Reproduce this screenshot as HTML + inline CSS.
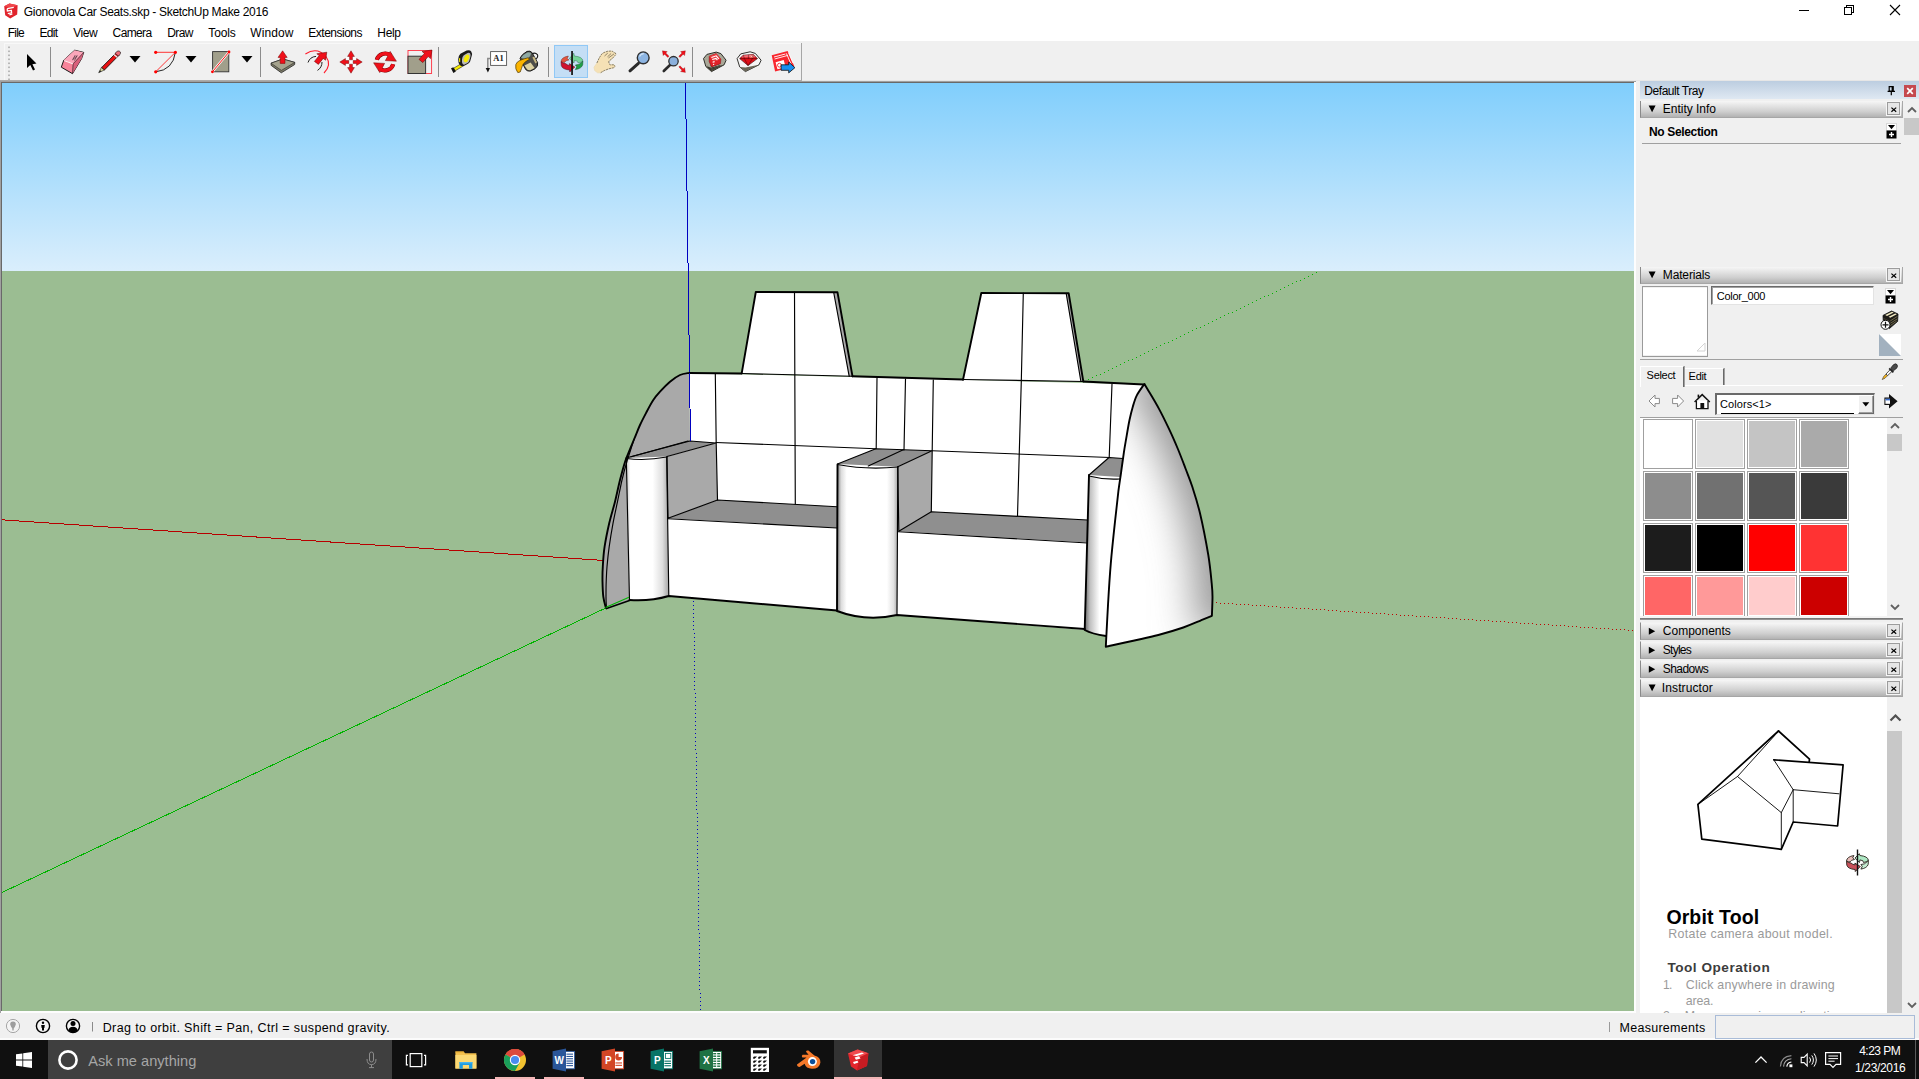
<!DOCTYPE html>
<html lang="en"><head><meta charset="utf-8"><title>Gionovola Car Seats.skp - SketchUp Make 2016</title>
<style>
html,body{margin:0;padding:0}
body{width:1919px;height:1079px;overflow:hidden;position:relative;background:#f0f0f0;font-family:"Liberation Sans",sans-serif;font-size:12px;color:#000}
.b{position:absolute;box-sizing:border-box;display:block}
.t{position:absolute;white-space:pre;line-height:0;height:0;display:block}
</style></head>
<body>
<div class="b" style="left:0;top:81px;width:1636px;height:932px;border-top:1px solid #a0a0a0;border-left:1px solid #a0a0a0;background:#fdfdfd"></div>
<div class="b" style="left:1px;top:82px;width:1633px;height:929px;background:#696969"></div>
<div class="b" id="sky" style="left:2px;top:83px;width:1632px;height:188px;background:linear-gradient(#80cefc,#daeefc)"></div>
<div class="b" id="ground" style="left:2px;top:271px;width:1632px;height:740px;background:#9bbd92"></div>
<svg class="b" id="scene" style="left:2px;top:83px" width="1632" height="928" viewBox="2 83 1632 928">
<defs>
<linearGradient id="cylL" x1="0" x2="1" y1="0" y2="0"><stop offset="0" stop-color="#c8c8c8"/><stop offset="0.1" stop-color="#fff"/><stop offset="0.62" stop-color="#fff"/><stop offset="0.85" stop-color="#dedede"/><stop offset="1" stop-color="#a4a4a4"/></linearGradient>
<linearGradient id="cylM" x1="0" x2="1" y1="0" y2="0"><stop offset="0" stop-color="#7c7c7c"/><stop offset="0.07" stop-color="#dcdcdc"/><stop offset="0.16" stop-color="#fff"/><stop offset="0.82" stop-color="#fff"/><stop offset="0.93" stop-color="#e2e2e2"/><stop offset="1" stop-color="#a6a6a6"/></linearGradient>
<linearGradient id="cylR" x1="0" x2="1" y1="0" y2="0"><stop offset="0" stop-color="#686868"/><stop offset="0.15" stop-color="#c0c0c0"/><stop offset="0.42" stop-color="#fff"/><stop offset="1" stop-color="#fff"/></linearGradient>
<linearGradient id="dome" gradientUnits="userSpaceOnUse" x1="1125" y1="500" x2="1215" y2="540"><stop offset="0" stop-color="#fff"/><stop offset="0.35" stop-color="#f2f2f2"/><stop offset="0.75" stop-color="#d4d4d4"/><stop offset="1" stop-color="#a8a8a8"/></linearGradient>
<filter id="blur" filterUnits="userSpaceOnUse" x="1080" y="360" width="180" height="310"><feGaussianBlur stdDeviation="20"/></filter>
</defs>
<g fill="none" shape-rendering="crispEdges">
<line x1="0" y1="519.7" x2="603" y2="560.4" stroke="#b80000" stroke-width="1"/>
<line x1="0" y1="893.4" x2="606" y2="607.9" stroke="#00b400" stroke-width="1"/>
<line x1="685.5" y1="83" x2="690.5" y2="441" stroke="#0000c0" stroke-width="1"/>
<path d="M693,601h1v1h-1zM693,605h1v1h-1zM693,609h1v1h-1zM693,613h1v1h-1zM693,617h1v1h-1zM693,621h1v1h-1zM693,625h1v1h-1zM693,629h1v1h-1zM694,633h1v1h-1zM694,637h1v1h-1zM694,641h1v1h-1zM694,645h1v1h-1zM694,649h1v1h-1zM694,653h1v1h-1zM694,657h1v1h-1zM694,661h1v1h-1zM694,665h1v1h-1zM694,669h1v1h-1zM694,673h1v1h-1zM694,677h1v1h-1zM694,681h1v1h-1zM694,685h1v1h-1zM694,689h1v1h-1zM695,693h1v1h-1zM695,697h1v1h-1zM695,701h1v1h-1zM695,705h1v1h-1zM695,709h1v1h-1zM695,713h1v1h-1zM695,717h1v1h-1zM695,721h1v1h-1zM695,725h1v1h-1zM695,729h1v1h-1zM695,733h1v1h-1zM695,737h1v1h-1zM695,741h1v1h-1zM695,745h1v1h-1zM695,749h1v1h-1zM696,753h1v1h-1zM696,757h1v1h-1zM696,761h1v1h-1zM696,765h1v1h-1zM696,769h1v1h-1zM696,773h1v1h-1zM696,777h1v1h-1zM696,781h1v1h-1zM696,785h1v1h-1zM696,789h1v1h-1zM696,793h1v1h-1zM696,797h1v1h-1zM696,801h1v1h-1zM696,805h1v1h-1zM696,809h1v1h-1zM697,813h1v1h-1zM697,817h1v1h-1zM697,821h1v1h-1zM697,825h1v1h-1zM697,829h1v1h-1zM697,833h1v1h-1zM697,837h1v1h-1zM697,841h1v1h-1zM697,845h1v1h-1zM697,849h1v1h-1zM697,853h1v1h-1zM697,857h1v1h-1zM697,861h1v1h-1zM697,865h1v1h-1zM697,869h1v1h-1zM698,873h1v1h-1zM698,877h1v1h-1zM698,881h1v1h-1zM698,885h1v1h-1zM698,889h1v1h-1zM698,893h1v1h-1zM698,897h1v1h-1zM698,901h1v1h-1zM698,905h1v1h-1zM698,909h1v1h-1zM698,913h1v1h-1zM698,917h1v1h-1zM698,921h1v1h-1zM698,925h1v1h-1zM698,929h1v1h-1zM699,933h1v1h-1zM699,937h1v1h-1zM699,941h1v1h-1zM699,945h1v1h-1zM699,949h1v1h-1zM699,953h1v1h-1zM699,957h1v1h-1zM699,961h1v1h-1zM699,965h1v1h-1zM699,969h1v1h-1zM699,973h1v1h-1zM699,977h1v1h-1zM699,981h1v1h-1zM699,985h1v1h-1zM699,989h1v1h-1zM700,993h1v1h-1zM700,997h1v1h-1zM700,1001h1v1h-1zM700,1005h1v1h-1zM700,1009h1v1h-1z" fill="#0000c0" shape-rendering="crispEdges"/>
<path d="M1316,272h1v1h-1zM1312,274h1v1h-1zM1308,276h1v1h-1zM1304,278h1v1h-1zM1300,280h1v1h-1zM1296,281h1v1h-1zM1292,283h1v1h-1zM1288,285h1v1h-1zM1284,287h1v1h-1zM1280,289h1v1h-1zM1276,291h1v1h-1zM1272,293h1v1h-1zM1268,295h1v1h-1zM1264,296h1v1h-1zM1260,298h1v1h-1zM1256,300h1v1h-1zM1252,302h1v1h-1zM1248,304h1v1h-1zM1244,306h1v1h-1zM1240,308h1v1h-1zM1236,310h1v1h-1zM1232,312h1v1h-1zM1228,313h1v1h-1zM1224,315h1v1h-1zM1220,317h1v1h-1zM1216,319h1v1h-1zM1212,321h1v1h-1zM1208,323h1v1h-1zM1204,325h1v1h-1zM1200,327h1v1h-1zM1196,328h1v1h-1zM1192,330h1v1h-1zM1188,332h1v1h-1zM1184,334h1v1h-1zM1180,336h1v1h-1zM1176,338h1v1h-1zM1172,340h1v1h-1zM1168,342h1v1h-1zM1164,343h1v1h-1zM1160,345h1v1h-1zM1156,347h1v1h-1zM1152,349h1v1h-1zM1148,351h1v1h-1zM1144,353h1v1h-1zM1140,355h1v1h-1zM1136,357h1v1h-1zM1132,359h1v1h-1zM1128,360h1v1h-1zM1124,362h1v1h-1zM1120,364h1v1h-1zM1116,366h1v1h-1zM1112,368h1v1h-1zM1108,370h1v1h-1zM1104,372h1v1h-1zM1100,374h1v1h-1zM1096,375h1v1h-1zM1092,377h1v1h-1zM1088,379h1v1h-1z" fill="#00b400" shape-rendering="crispEdges"/>
<path d="M1632,630h1v1h-1zM1628,630h1v1h-1zM1624,629h1v1h-1zM1620,629h1v1h-1zM1616,629h1v1h-1zM1612,629h1v1h-1zM1608,628h1v1h-1zM1604,628h1v1h-1zM1600,628h1v1h-1zM1596,628h1v1h-1zM1592,627h1v1h-1zM1588,627h1v1h-1zM1584,627h1v1h-1zM1580,627h1v1h-1zM1576,626h1v1h-1zM1572,626h1v1h-1zM1568,626h1v1h-1zM1564,625h1v1h-1zM1560,625h1v1h-1zM1556,625h1v1h-1zM1552,625h1v1h-1zM1548,624h1v1h-1zM1544,624h1v1h-1zM1540,624h1v1h-1zM1536,624h1v1h-1zM1532,623h1v1h-1zM1528,623h1v1h-1zM1524,623h1v1h-1zM1520,623h1v1h-1zM1516,622h1v1h-1zM1512,622h1v1h-1zM1508,622h1v1h-1zM1504,621h1v1h-1zM1500,621h1v1h-1zM1496,621h1v1h-1zM1492,621h1v1h-1zM1488,620h1v1h-1zM1484,620h1v1h-1zM1480,620h1v1h-1zM1476,620h1v1h-1zM1472,619h1v1h-1zM1468,619h1v1h-1zM1464,619h1v1h-1zM1460,619h1v1h-1zM1456,618h1v1h-1zM1452,618h1v1h-1zM1448,618h1v1h-1zM1444,617h1v1h-1zM1440,617h1v1h-1zM1436,617h1v1h-1zM1432,617h1v1h-1zM1428,616h1v1h-1zM1424,616h1v1h-1zM1420,616h1v1h-1zM1416,616h1v1h-1zM1412,615h1v1h-1zM1408,615h1v1h-1zM1404,615h1v1h-1zM1400,615h1v1h-1zM1396,614h1v1h-1zM1392,614h1v1h-1zM1388,614h1v1h-1zM1384,613h1v1h-1zM1380,613h1v1h-1zM1376,613h1v1h-1zM1372,613h1v1h-1zM1368,612h1v1h-1zM1364,612h1v1h-1zM1360,612h1v1h-1zM1356,612h1v1h-1zM1352,611h1v1h-1zM1348,611h1v1h-1zM1344,611h1v1h-1zM1340,611h1v1h-1zM1336,610h1v1h-1zM1332,610h1v1h-1zM1328,610h1v1h-1zM1324,609h1v1h-1zM1320,609h1v1h-1zM1316,609h1v1h-1zM1312,609h1v1h-1zM1308,608h1v1h-1zM1304,608h1v1h-1zM1300,608h1v1h-1zM1296,608h1v1h-1zM1292,607h1v1h-1zM1288,607h1v1h-1zM1284,607h1v1h-1zM1280,607h1v1h-1zM1276,606h1v1h-1zM1272,606h1v1h-1zM1268,606h1v1h-1zM1264,605h1v1h-1zM1260,605h1v1h-1zM1256,605h1v1h-1zM1252,605h1v1h-1zM1248,604h1v1h-1zM1244,604h1v1h-1zM1240,604h1v1h-1zM1236,604h1v1h-1zM1232,603h1v1h-1zM1228,603h1v1h-1zM1224,603h1v1h-1zM1220,603h1v1h-1zM1216,602h1v1h-1z" fill="#c00000" shape-rendering="crispEdges"/>
</g>
<path d="M689.5,372.8 C687.9,373.2 683.2,373.5 680.0,375.0 C676.8,376.5 673.3,378.9 670.0,381.7 C666.7,384.5 662.8,388.6 660.0,391.7 C657.2,394.8 655.5,396.7 653.3,400.0 C651.1,403.3 648.9,407.5 646.7,411.7 C644.5,415.9 642.1,420.4 640.0,425.0 C637.9,429.6 636.2,434.3 634.2,439.0 C632.2,443.7 629.8,449.5 628.3,453.3 C626.8,457.1 626.4,457.6 625.0,462.0 C623.6,466.4 621.7,473.4 620.0,480.0 C618.3,486.6 616.8,494.5 615.0,501.7 C613.2,508.9 610.9,515.8 609.2,523.3 C607.5,530.8 605.7,539.5 604.6,546.7 C603.5,553.9 603.1,560.9 602.8,566.7 C602.4,572.5 602.4,576.7 602.5,581.7 C602.6,586.7 602.8,592.4 603.3,596.7 C603.8,601.0 605.4,605.7 605.8,607.5 L629.5,600 L626.3,458 L690,441 Z" fill="#a9a9a9"/>
<path d="M689.5,373 L1144,384.5 L1106,636 L1084.7,630 L897,615 L837,611 L669,596.5 L629.5,600 L626.3,458 L690,441 Z" fill="#fff"/>
<path d="M755.8,292 L837.5,292.3 L852.5,376.3 L741.7,373.3 Z" fill="#fff"/>
<path d="M833.7,292.5 L837.5,292.3 L852.5,376.3 L849.2,376.3 Z" fill="#a9a9a9"/>
<path d="M981.3,293 L1068.7,293.3 L1083.3,381.3 L963,379.7 Z" fill="#fff"/>
<path d="M1066.2,293.5 L1068.7,293.3 L1083.3,381.3 L1080.8,381 Z" fill="#a9a9a9"/>
<path d="M626,458 L690,441 L716,443 L667,456.5 Z" fill="#8f8f8f"/>
<path d="M667,456.7 L716,443 L717.5,500 L668,518.3 Z" fill="#a9a9a9"/>
<path d="M668,518.3 L717.5,500 L837,506.7 L837,528 Z" fill="#8f8f8f"/>
<path d="M837.5,464 L875.8,448.7 L932,450.8 L897.8,466.7 Z" fill="#8f8f8f"/>
<path d="M897.8,466.7 L932,450.8 L931.3,511.7 L898.8,531.3 Z" fill="#a9a9a9"/>
<path d="M898.8,531.3 L931.3,511.7 L1087.5,520 L1087.5,542.5 Z" fill="#8f8f8f"/>
<path d="M1089,475 L1109,457.5 L1123,458.5 L1120,477 Z" fill="#8f8f8f"/>
<path d="M626.3,458.5 Q646,461 666.7,457 L668.8,596 Q650,601.5 629.5,600 Z" fill="url(#cylL)"/>
<path d="M837.5,464.5 Q866,470 897.8,467 L897,615 Q866,622 837,611 Z" fill="url(#cylM)"/>
<path d="M1089,476 Q1104,480 1120,479 L1106,636 Q1092,634 1084.7,630 Z" fill="url(#cylR)"/>
<clipPath id="domeclip"><path d="M1144.5,384.0 C1144.2,384.4 1144.1,384.2 1142.8,386.1 C1141.5,388.0 1138.4,392.2 1136.7,395.6 C1135.0,399.0 1134.0,402.6 1132.8,406.7 C1131.6,410.8 1130.5,415.2 1129.5,420.0 C1128.5,424.8 1127.6,430.2 1126.7,435.6 C1125.8,441.0 1124.8,446.2 1123.9,452.3 C1123.0,458.4 1122.0,465.8 1121.1,472.3 C1120.2,478.8 1119.4,483.0 1118.4,491.2 C1117.4,499.4 1116.3,509.7 1115.0,521.7 C1113.7,533.7 1112.0,549.4 1110.8,563.3 C1109.6,577.2 1108.8,591.1 1108.0,605.0 C1107.2,618.9 1106.2,639.8 1105.8,646.7 C1110.4,645.7 1124.5,642.8 1133.3,640.8 C1142.0,638.8 1150.0,637.2 1158.3,635.0 C1166.6,632.8 1176.3,629.9 1183.3,627.5 C1190.2,625.1 1195.2,622.8 1200.0,620.8 C1204.8,618.8 1209.9,616.6 1211.9,615.8 C1212.0,612.6 1212.5,602.1 1212.5,596.7 C1212.5,591.3 1212.4,590.2 1211.7,583.3 C1211.0,576.3 1210.2,566.7 1208.3,555.0 C1206.3,543.3 1202.7,524.7 1200.0,513.3 C1197.3,501.9 1194.7,494.2 1192.3,486.8 C1189.9,479.4 1188.1,475.3 1185.7,469.0 C1183.3,462.7 1180.7,455.7 1177.9,449.0 C1175.1,442.3 1172.2,435.6 1169.0,428.9 C1165.8,422.2 1162.2,414.8 1159.0,408.9 C1155.8,403.0 1152.4,397.4 1150.0,393.3 C1147.6,389.2 1145.4,385.6 1144.5,384.0 Z"/></clipPath>
<path d="M1144.5,384.0 C1144.2,384.4 1144.1,384.2 1142.8,386.1 C1141.5,388.0 1138.4,392.2 1136.7,395.6 C1135.0,399.0 1134.0,402.6 1132.8,406.7 C1131.6,410.8 1130.5,415.2 1129.5,420.0 C1128.5,424.8 1127.6,430.2 1126.7,435.6 C1125.8,441.0 1124.8,446.2 1123.9,452.3 C1123.0,458.4 1122.0,465.8 1121.1,472.3 C1120.2,478.8 1119.4,483.0 1118.4,491.2 C1117.4,499.4 1116.3,509.7 1115.0,521.7 C1113.7,533.7 1112.0,549.4 1110.8,563.3 C1109.6,577.2 1108.8,591.1 1108.0,605.0 C1107.2,618.9 1106.2,639.8 1105.8,646.7 C1110.4,645.7 1124.5,642.8 1133.3,640.8 C1142.0,638.8 1150.0,637.2 1158.3,635.0 C1166.6,632.8 1176.3,629.9 1183.3,627.5 C1190.2,625.1 1195.2,622.8 1200.0,620.8 C1204.8,618.8 1209.9,616.6 1211.9,615.8 C1212.0,612.6 1212.5,602.1 1212.5,596.7 C1212.5,591.3 1212.4,590.2 1211.7,583.3 C1211.0,576.3 1210.2,566.7 1208.3,555.0 C1206.3,543.3 1202.7,524.7 1200.0,513.3 C1197.3,501.9 1194.7,494.2 1192.3,486.8 C1189.9,479.4 1188.1,475.3 1185.7,469.0 C1183.3,462.7 1180.7,455.7 1177.9,449.0 C1175.1,442.3 1172.2,435.6 1169.0,428.9 C1165.8,422.2 1162.2,414.8 1159.0,408.9 C1155.8,403.0 1152.4,397.4 1150.0,393.3 C1147.6,389.2 1145.4,385.6 1144.5,384.0 Z" fill="#fff"/>
<g clip-path="url(#domeclip)"><path d="M1144.5,384.0 C1145.4,385.6 1147.6,389.2 1150.0,393.3 C1152.4,397.4 1155.8,403.0 1159.0,408.9 C1162.2,414.8 1165.8,422.2 1169.0,428.9 C1172.2,435.6 1175.1,442.3 1177.9,449.0 C1180.7,455.7 1183.3,462.7 1185.7,469.0 C1188.1,475.3 1189.9,479.4 1192.3,486.8 C1194.7,494.2 1197.3,501.9 1200.0,513.3 C1202.7,524.7 1206.3,543.3 1208.3,555.0 C1210.2,566.7 1211.0,576.3 1211.7,583.3 C1212.4,590.2 1212.5,591.3 1212.5,596.7 C1212.5,602.1 1212.0,612.6 1211.9,615.8 L1240,616 L1240,384 Z" fill="#969696" stroke="#969696" stroke-width="34" filter="url(#blur)"/></g>
<g fill="none" stroke="#000" stroke-linejoin="round" stroke-linecap="round" stroke-width="1.15">
<path d="M716,442.5 L875.8,448.7"/>
<path d="M932,450.8 L1110,457.5"/>
<path d="M715.3,373.5 L716.2,443 L717.5,500"/>
<path d="M794.5,292 L795.3,504"/>
<path d="M877,378 L876.2,448.5"/>
<path d="M905.5,379 L904,450"/>
<path d="M933.3,380 L932.2,450.8 L931.3,511.7"/>
<path d="M1023.3,293 L1021.3,381 L1017.5,516"/>
<path d="M1112,384 L1109.2,457.5"/>
<path d="M741.7,373.5 L852.5,376.3"/>
<path d="M963,379.5 L1083.3,381.5"/>
<path d="M833.7,292.5 L849.2,376.3"/>
<path d="M1066.2,293.5 L1080.8,381"/>
<path d="M626,458 L690,441 L716,443 L667,456.5"/>
<path d="M631,456.7 L688,441"/>
<path d="M667,456.7 L668,518.3 L717.5,500 L837,506.7"/>
<path d="M668,518.8 L837,528"/>
<path d="M666.7,457 L668.8,596"/>
<path d="M626.3,458.5 Q646,461 666.7,457"/>
<path d="M837.5,464 L875.8,448.7 L932,450.8 L897.8,466.7"/>
<path d="M868.3,466 L903.3,449.7"/>
<path d="M837.5,464.5 Q866,470 897.8,467"/>
<path d="M897.8,466.7 L898.8,531.3 L931.3,511.7 L1087.5,520"/>
<path d="M898.5,531.8 L1087.5,543"/>
<path d="M897.8,467 L897,615"/>
<path d="M1089,475 L1109,457.5 L1123,458.5"/>
<path d="M1089,476 Q1104,480 1120,479"/>
<path d="M626.3,458 L629.5,600"/>
<path d="M634.2,439.0 C633.4,441.4 630.7,449.7 629.5,453.5 C628.3,457.3 628.0,457.6 626.8,462.0 C625.5,466.4 623.5,473.4 622.0,480.0 C620.5,486.6 619.0,494.5 617.5,501.7 C616.0,508.9 614.4,515.8 613.0,523.3 C611.6,530.8 610.2,539.5 609.2,546.7 C608.2,553.9 607.5,560.9 607.0,566.7 C606.5,572.5 606.4,576.7 606.2,581.7 C606.0,586.7 606.0,592.5 606.0,596.7 C606.0,600.9 606.3,605.3 606.4,607.0"/>
</g>
<g fill="none" stroke="#000" stroke-linejoin="round" stroke-linecap="round" stroke-width="1.9">
<path d="M689.5,372.8 C687.9,373.2 683.2,373.5 680.0,375.0 C676.8,376.5 673.3,378.9 670.0,381.7 C666.7,384.5 662.8,388.6 660.0,391.7 C657.2,394.8 655.5,396.7 653.3,400.0 C651.1,403.3 648.9,407.5 646.7,411.7 C644.5,415.9 642.1,420.4 640.0,425.0 C637.9,429.6 636.2,434.3 634.2,439.0 C632.2,443.7 629.8,449.5 628.3,453.3 C626.8,457.1 626.4,457.6 625.0,462.0 C623.6,466.4 621.7,473.4 620.0,480.0 C618.3,486.6 616.8,494.5 615.0,501.7 C613.2,508.9 610.9,515.8 609.2,523.3 C607.5,530.8 605.7,539.5 604.6,546.7 C603.5,553.9 603.1,560.9 602.8,566.7 C602.4,572.5 602.4,576.7 602.5,581.7 C602.6,586.7 602.8,592.4 603.3,596.7 C603.8,601.0 605.4,605.7 605.8,607.5"/>
<path d="M689.5,373 L741.7,373.5"/>
<path d="M852.5,376.3 L963,379.5"/>
<path d="M1083.3,381.5 L1144,384.5"/>
<path d="M741.7,373.3 L755.8,292 L837.5,292.3 L852.5,376.3"/>
<path d="M963,379.7 L981.3,293 L1068.7,293.3 L1083.3,381.3"/>
<path d="M629.5,600 Q650,601.5 668.8,596 L837,610.5"/>
<path d="M837.5,464.5 L837,611 Q866,622 897,615 L1084.7,629"/>
<path d="M1089,475 L1084.7,630 Q1092,634 1106,636"/>
<path d="M1144.5,384.0 C1144.2,384.4 1144.1,384.2 1142.8,386.1 C1141.5,388.0 1138.4,392.2 1136.7,395.6 C1135.0,399.0 1134.0,402.6 1132.8,406.7 C1131.6,410.8 1130.5,415.2 1129.5,420.0 C1128.5,424.8 1127.6,430.2 1126.7,435.6 C1125.8,441.0 1124.8,446.2 1123.9,452.3 C1123.0,458.4 1122.0,465.8 1121.1,472.3 C1120.2,478.8 1119.4,483.0 1118.4,491.2 C1117.4,499.4 1116.3,509.7 1115.0,521.7 C1113.7,533.7 1112.0,549.4 1110.8,563.3 C1109.6,577.2 1108.8,591.1 1108.0,605.0 C1107.2,618.9 1106.2,639.8 1105.8,646.7 C1110.4,645.7 1124.5,642.8 1133.3,640.8 C1142.0,638.8 1150.0,637.2 1158.3,635.0 C1166.6,632.8 1176.3,629.9 1183.3,627.5 C1190.2,625.1 1195.2,622.8 1200.0,620.8 C1204.8,618.8 1209.9,616.6 1211.9,615.8 C1212.0,612.6 1212.5,602.1 1212.5,596.7 C1212.5,591.3 1212.4,590.2 1211.7,583.3 C1211.0,576.3 1210.2,566.7 1208.3,555.0 C1206.3,543.3 1202.7,524.7 1200.0,513.3 C1197.3,501.9 1194.7,494.2 1192.3,486.8 C1189.9,479.4 1188.1,475.3 1185.7,469.0 C1183.3,462.7 1180.7,455.7 1177.9,449.0 C1175.1,442.3 1172.2,435.6 1169.0,428.9 C1165.8,422.2 1162.2,414.8 1159.0,408.9 C1155.8,403.0 1152.4,397.4 1150.0,393.3 C1147.6,389.2 1145.4,385.6 1144.5,384.0 Z"/>
</g>
<g fill="none" shape-rendering="crispEdges"><line x1="689.5" y1="373" x2="690.5" y2="441" stroke="#0000c0" stroke-width="1"/></g>
<line x1="606.5" y1="608.6" x2="629.5" y2="600.4" stroke="#000" stroke-width="1.6" stroke-linecap="round"/>
<line x1="605.5" y1="607.4" x2="629" y2="597.2" stroke="#00b400" stroke-width="1.1"/>
</svg>
<div class="b" style="left:0px;top:0px;width:1919px;height:41px;background:#fff;"></div>
<svg class="b" style="left:3px;top:3px" width="16" height="17" viewBox="3 3 16 17">
<path d="M4.2,6.2 L9.5,3.6 L17.6,5.2 L17.2,14.6 L10.2,18.6 L5.2,15.2 Z" fill="#e0232b"/>
<path d="M4.2,6.2 L9.5,3.6 L17.6,5.2 L11.6,8 Z" fill="#f0464b"/>
<path d="M7.2,8.6 L13.8,7.4 M7.2,8.6 L7.4,11 L11.4,10.4 L11.6,12.8 L7.8,13.6 M9.4,14.9 L12.4,14" fill="none" stroke="#fff" stroke-width="1.3"/>
</svg>
<span class="t" style="left:23.80px;top:11.60px;font-size:12px;color:#000;letter-spacing:-0.313px;">Gionovola Car Seats.skp - SketchUp Make 2016</span>
<svg class="b" style="left:1790px;top:0" width="129" height="22" viewBox="1790 0 129 22" shape-rendering="crispEdges">
<rect x="1799" y="10" width="10" height="1" fill="#000"/>
<rect x="1846.5" y="5.5" width="7" height="7" fill="none" stroke="#000"/>
<rect x="1844.5" y="7.5" width="7" height="7" fill="#fff" stroke="#000"/>
<path d="M1890,5 L1900,15 M1900,5 L1890,15" stroke="#000" stroke-width="1.1" fill="none" shape-rendering="auto"/>
</svg>
<span class="t" style="left:7.80px;top:32.70px;font-size:12px;color:#000;letter-spacing:-0.821px;">File</span>
<span class="t" style="left:39.50px;top:32.70px;font-size:12px;color:#000;letter-spacing:-0.681px;">Edit</span>
<span class="t" style="left:73.30px;top:32.70px;font-size:12px;color:#000;letter-spacing:-0.476px;">View</span>
<span class="t" style="left:112.60px;top:32.70px;font-size:12px;color:#000;letter-spacing:-0.621px;">Camera</span>
<span class="t" style="left:167.30px;top:32.70px;font-size:12px;color:#000;letter-spacing:-0.612px;">Draw</span>
<span class="t" style="left:208.30px;top:32.70px;font-size:12px;color:#000;letter-spacing:-0.128px;">Tools</span>
<span class="t" style="left:250.20px;top:32.70px;font-size:12px;color:#000;letter-spacing:0.117px;">Window</span>
<span class="t" style="left:308.30px;top:32.70px;font-size:12px;color:#000;letter-spacing:-0.500px;">Extensions</span>
<span class="t" style="left:377.30px;top:32.70px;font-size:12px;color:#000;letter-spacing:-0.335px;">Help</span>
<div class="b" style="left:0px;top:41px;width:1919px;height:40px;background:#f0f0f0;"></div>
<div class="b" style="left:4px;top:43px;width:798px;height:1px;background:#f8f8f8;"></div>
<div class="b" style="left:801px;top:43px;width:1px;height:38px;background:#a6a6a6;"></div>
<div class="b" style="left:4px;top:43px;width:1px;height:37px;background:#f8f8f8;"></div>
<div class="b" style="left:0px;top:80px;width:802px;height:1px;background:#ababab;"></div>
<div class="b" style="left:802px;top:80px;width:1117px;height:1px;background:#e6e6e6;"></div>
<div class="b" style="left:554px;top:45px;width:34px;height:33px;background:#c4def5;border:1px solid #90c8f6"></div>
<svg class="b" style="left:0;top:41px" width="810" height="40" viewBox="0 41 810 40">
<rect x="8" y="46.5" width="2" height="1.6" fill="#b8b8b8"/>
<rect x="8" y="50.5" width="2" height="1.6" fill="#b8b8b8"/>
<rect x="8" y="54.5" width="2" height="1.6" fill="#b8b8b8"/>
<rect x="8" y="58.5" width="2" height="1.6" fill="#b8b8b8"/>
<rect x="8" y="62.5" width="2" height="1.6" fill="#b8b8b8"/>
<rect x="8" y="66.5" width="2" height="1.6" fill="#b8b8b8"/>
<rect x="8" y="70.5" width="2" height="1.6" fill="#b8b8b8"/>
<rect x="8" y="74.5" width="2" height="1.6" fill="#b8b8b8"/>
<rect x="8" y="78.5" width="2" height="1.6" fill="#b8b8b8"/>
<rect x="50.0" y="47" width="1" height="30" fill="#8c8c8c"/>
<rect x="260.0" y="47" width="1" height="30" fill="#8c8c8c"/>
<rect x="438.0" y="47" width="1" height="30" fill="#8c8c8c"/>
<rect x="548.0" y="47" width="1" height="30" fill="#8c8c8c"/>
<rect x="692.0" y="47" width="1" height="30" fill="#8c8c8c"/>
<path d="M27,54 L27,68 L30.3,65 L33,70.5 L35,69.5 L32.4,64.2 L36.5,63.5 Z" fill="#000"/>
<path d="M61.3,67.2 L63.8,60.1 L74.7,50.2 L83.7,52.4 L81.6,58.6 L72.5,73.7 Z" fill="#f7849a" stroke="#1a1a1a" stroke-width="1" stroke-linejoin="round"/>
<path d="M63.8,60.1 L74.7,50.2 L83.7,52.4 L73.1,63.6 Z" fill="#fba6ba"/>
<path d="M73.1,63.8 L83.7,52.4 L81.6,58.6 L72.5,73.7 Z" fill="#d9607c"/>
<path d="M73.1,63.8 L72.5,73.7 M73.1,63.8 L83.7,52.4" stroke="#1a1a1a" stroke-width="0.6" fill="none"/>
<path d="M64.2,60.6 L73,63.9" stroke="#fff" stroke-width="0.9"/>
<path d="M72.6,59.8 L75.2,55.2 M74.4,60.6 L77.2,55.6 M72.6,59.8 L77.2,55.6" stroke="#3a2a30" stroke-width="0.7" fill="none"/>
<path d="M98.7,72.7 L101.5,67.3 L104.8,69.8 Z" fill="#d8d49a" stroke="#222" stroke-width="0.6"/>
<path d="M98.7,72.7 L100,70.2 L101.4,71.3 Z" fill="#111"/>
<path d="M101.7,67.5 L116.4,52.6 L119.2,55 L104.5,69.9 Z" fill="#e81111" stroke="#1a1a1a" stroke-width="0.9"/>
<path d="M115,53.4 L117.2,51.2 Q119.4,50.3 120.4,52 Q120.9,53.5 119.6,54.8 L118.4,56 Z" fill="#f06a78" stroke="#222" stroke-width="0.7"/>
<path d="M113.8,54.6 L117.2,57.2" stroke="#eee" stroke-width="1.2"/>
<path d="M129.5,56 L140.5,56 L135,62.5 Z" fill="#000"/>
<path d="M155.7,71.8 Q173,70 175.4,52.3" fill="none" stroke="#111" stroke-width="0.9"/>
<path d="M155.7,52.3 L175.4,52.3 L155.7,71.8" fill="none" stroke="#ff2020" stroke-width="0.9"/>
<circle cx="155.7" cy="52.3" r="1.6" fill="#ff0000"/>
<circle cx="175.4" cy="52.3" r="1.6" fill="#ff0000"/>
<circle cx="155.7" cy="71.8" r="1.6" fill="#ff0000"/>
<path d="M185.5,56 L196.5,56 L191,62.5 Z" fill="#000"/>
<rect x="212.6" y="51.6" width="16.2" height="20.2" fill="#a19f8b" stroke="#333" stroke-width="0.9"/>
<path d="M212.4,71.8 L229,52" stroke="#fff" stroke-width="2.2"/><path d="M212.4,71.8 L229,52" stroke="#ff1010" stroke-width="1"/>
<circle cx="212.4" cy="71.8" r="1.4" fill="#f00"/><circle cx="229" cy="52" r="1.4" fill="#f00"/>
<path d="M241.5,56 L252.5,56 L247,62.5 Z" fill="#000"/>
<path d="M271,63.2 L282.8,59 L294.8,62.4 L294.6,64.6 L281.3,72.8 L271.2,65.4 Z" fill="#7d7b68" stroke="#222" stroke-width="0.8" stroke-linejoin="round"/>
<path d="M271,63.2 L282.8,59 L294.8,62.4 L281.4,70.4 Z" fill="#a5a38e" stroke="#222" stroke-width="0.6"/>
<path d="M282.6,50.8 L287.2,57.4 L285,57.4 L285,63.4 L280.2,63.4 L280.2,57.4 L278,57.4 Z" fill="#f0101a" stroke="#7a0000" stroke-width="0.5"/>
<path d="M305.4,54 Q317,46.5 326,56.5 Q332,65 324,73" fill="none" stroke="#ff1a2a" stroke-width="1.1"/>
<path d="M308,62.5 Q310,56.8 316,56.4 M317.5,70.4 Q322,67.5 322,62" fill="none" stroke="#222" stroke-width="1"/>
<path d="M326.8,52.2 L325.6,60.2 L323.2,58.4 L318.4,64.4 L314.4,61.4 L319.2,55.6 L316.8,53.8 Z" fill="#f0101a" stroke="#5a0000" stroke-width="0.5"/>
<g fill="#f0101a" stroke="#6a0000" stroke-width="0.45" stroke-linejoin="round"><path d="M351,50.8 L354.4,56.4 L352.4,56.4 L352.4,59.8 L349.6,59.8 L349.6,56.4 L347.6,56.4 Z"/><path d="M351,73.2 L354.4,67.6 L352.4,67.6 L352.4,64.2 L349.6,64.2 L349.6,67.6 L347.6,67.6 Z"/><path d="M339.8,62 L345.4,58.6 L345.4,60.6 L348.8,60.6 L348.8,63.4 L345.4,63.4 L345.4,65.4 Z"/><path d="M362.2,62 L356.6,58.6 L356.6,60.6 L353.2,60.6 L353.2,63.4 L356.6,63.4 L356.6,65.4 Z"/></g>
<g fill="#fff"><rect x="346.2" y="57.2" width="2.6" height="2.6"/><rect x="353.2" y="57.2" width="2.6" height="2.6"/><rect x="346.2" y="64.2" width="2.6" height="2.6"/><rect x="353.2" y="64.2" width="2.6" height="2.6"/><rect x="349.7" y="60.7" width="2.6" height="2.6"/></g>
<g fill="none" stroke="#6a0000" stroke-width="4.2"><path d="M376.8,59.8 A8.6,8.6 0 0 1 390.4,55.4"/><path d="M393.2,64.2 A8.6,8.6 0 0 1 379.6,68.6"/></g>
<g fill="#f0101a" stroke="#6a0000" stroke-width="0.5" stroke-linejoin="round"><path d="M390.2,51.4 L396.4,61.2 L385.4,60.6 Z"/><path d="M379.8,72.6 L373.6,62.8 L384.6,63.4 Z"/></g>
<g fill="none" stroke="#f0101a" stroke-width="3.3"><path d="M376.8,59.8 A8.6,8.6 0 0 1 390.4,55.4"/><path d="M393.2,64.2 A8.6,8.6 0 0 1 379.6,68.6"/></g>
<rect x="408" y="50.5" width="23.6" height="23" fill="none" stroke="#ff3040" stroke-width="0.9"/>
<rect x="408" y="56.2" width="17.6" height="17.3" fill="#a19f8b" stroke="#333" stroke-width="1"/>
<path d="M432,50 L430.6,58.6 L428.2,56.6 L422.8,62.6 L419,59.4 L424.4,53.4 L422,51.4 Z" fill="#f0101a" stroke="#5a0000" stroke-width="0.5"/>
<path d="M453.6,68.2 L461,63.8 L462.6,66.4 L455.2,70.8 Z" fill="#f6ea00" stroke="#222" stroke-width="0.6"/>
<path d="M451,68.2 L453.4,67.2 L455.8,71.4 L453.4,73 Z" fill="#111"/>
<path d="M458.2,59.2 Q458.6,55.4 460.4,53.8 L466.6,50.6 Q470,49.8 471.2,51.6 Q472.4,53.6 471.8,55.6 L470.2,61.2 Q469.4,63 468,63.8 L463.4,66.2 Q461.4,66.6 460,65.2 Q458,63 458.2,59.2 Z" fill="#1a1a1a"/>
<path d="M462,59.6 Q462.2,56.6 463.8,55.2 L467.6,53 Q469.8,52.4 470.4,54 Q470.8,55.4 470.4,56.8 L469.2,61 Q468.6,62.4 467.6,63 L464.6,64.6 Q463,64.8 462.4,63.4 Q461.8,61.8 462,59.6 Z" fill="#b9b9b9"/>
<ellipse cx="466.5" cy="58.4" rx="2.3" ry="4" transform="rotate(26 466.5 58.4)" fill="#f6ea00"/>
<path d="M459,58.4 L460.2,57.8 L460.2,62.2 L459.2,62 Z" fill="#f6ea00"/>
<rect x="490.6" y="51.6" width="16" height="13.8" fill="#fff" stroke="#555" stroke-width="0.9"/>
<text x="493.3" y="60.8" font-family="&quot;Liberation Serif&quot;, serif" font-weight="700" font-size="8.6" fill="#222" textLength="10.4" lengthAdjust="spacingAndGlyphs">A1</text>
<path d="M490.4,58.4 L487.8,58.4 L487.8,68.4" fill="none" stroke="#8a8a8a" stroke-width="1.5"/>
<path d="M485.7,68 L490,68 L487.9,72.6 Z" fill="#111"/>
<path d="M531.6,54.2 Q535,51.8 537.4,54.6 Q538.6,57.2 535.4,59.6" fill="none" stroke="#1a1a1a" stroke-width="1.1"/>
<path d="M520,58.2 Q521.6,54.4 527,51.4 Q530.4,50.4 532,52.6 L537.6,62.6 Q538.6,66 535,68.8 L530.6,71 Q527.4,71.6 525.6,69.4 Z" fill="#4e4e4a" stroke="#1a1a1a" stroke-width="1" stroke-linejoin="round"/>
<path d="M521,57.8 Q522.4,54.8 527.2,52.4 Q529.8,51.8 531,53.2 Q530.8,56.2 528.4,57.8 Q524.6,59.6 521,57.8 Z" fill="#8faaa4"/>
<path d="M524.4,65.6 L530.6,62.6 L534.6,68 L530.2,70.2 Q527.8,70.4 526.8,69 Z" fill="#ddd2a0"/>
<path d="M532.4,57.4 L534.2,56.4 L537,62.2 L535.4,63.4 Z" fill="#c8b882"/>
<path d="M515.8,64.6 Q516.8,61.6 520,60.4 Q524.4,58.6 528,57.8 L529.6,59.2 Q524.4,61.6 522.6,65 Q521.6,68.6 520.2,72 L517.8,72.6 Q515,69 515.8,64.6 Z" fill="#fbb400" stroke="#4a3500" stroke-width="0.7" stroke-linejoin="round"/>
<path d="M561,61.4 Q561.4,57.2 568.4,56 L567.2,58.4 L569,60 Q565.4,60.4 564.6,62.4 Q562.6,62.6 561,61.4 Z" fill="#e2553f" stroke="#5a1a10" stroke-width="0.4"/>
<path d="M573.8,53.2 L574.4,56 Q582.4,56.8 582.9,60.8 Q581,62.6 578,63 Q578.6,60.8 574.4,60.4 L574,63 L569.4,58.6 Z" fill="#76d49a" stroke="#1d5a38" stroke-width="0.4"/>
<path d="M561,61.6 Q563,63.4 565.6,63.6 Q567,65 569.6,65.4 L569.4,63.6 L574.8,67 L569.8,72 L569.6,70 Q562.2,69.4 561.3,65.6 Z" fill="#d0122e" stroke="#4a0010" stroke-width="0.5"/>
<path d="M582.9,61 L582.7,64.8 Q581.6,68.6 575.4,69.6 L576.8,66.8 L575.4,65 Q579.6,64.8 580.6,63 Q582,62.4 582.9,61 Z" fill="#1fa046" stroke="#0d4a22" stroke-width="0.5"/>
<rect x="571.2" y="51" width="1.7" height="24" fill="#111"/>
<path d="M594,67.3 L596.9,63 L599.1,58.2 L601.6,54.2 L603.8,52.6 L607.5,51.3 L610.4,51.1 L612.6,51.3 L613.7,52.4 L615.5,53.1 L615.8,54.6 L612.2,58.6 L608.9,61.1 L608.9,63.7 L610.4,64.8 L614,64.8 L615.1,66.3 L613.7,67.7 L608.9,68.8 L604.2,70.6 L600.5,72.8 L597.6,72.8 L594.7,70.6 Z" fill="#f5e1b5" stroke="#e9d7ab" stroke-width="0.6" stroke-linejoin="round"/>
<path d="M596.9,63 L599.1,58.2 L601.6,54.2 L603.8,52.6 L607.5,51.3 L610.4,51.1 L612.6,51.3 L613.7,52.4 L615.5,53.1 L615.8,54.6 L612.2,58.6 L608.9,61.1 L608.9,63.7 L610.4,64.8 L614,64.8 L615.1,66.3 L613.7,67.7 L608.9,68.8 L604.2,70.6 L600.5,72.8" fill="none" stroke="#3a3426" stroke-width="0.7" stroke-dasharray="2.2 0.8" stroke-linejoin="round" opacity="0.8"/>
<path d="M604.5,56 L607.8,53.1 M607.5,56.8 L611.1,53.5 M608.4,58 L614,53.9" stroke="#3a3426" stroke-width="0.7" fill="none" opacity="0.75"/>
<path d="M638.4,63.4 L630,70.8" stroke="#2a2a2a" stroke-width="3" stroke-linecap="round"/>
<circle cx="643.2" cy="57.8" r="5.9" fill="#8db5e2" stroke="#2f2f2f" stroke-width="1.4"/>
<path d="M639.6,56.6 Q640.6,53.8 643.8,53.6" fill="none" stroke="#cfe3f7" stroke-width="1.2"/>
<path d="M670,65 L663.8,71" stroke="#2a2a2a" stroke-width="2.6" stroke-linecap="round"/>
<circle cx="673.5" cy="61.2" r="4.7" fill="#8bb0dc" stroke="#2f2f2f" stroke-width="1.3"/>
<g fill="#f0101a" stroke="#7a0000" stroke-width="0.3"><path d="M662.4,50.8 L667.2,51.6 L665.8,53 L669,56.2 L667.8,57.4 L664.6,54.2 L663.2,55.6 Z"/><path d="M685.4,50.8 L680.6,51.6 L682,53 L678.8,56.2 L680,57.4 L683.2,54.2 L684.6,55.6 Z"/><path d="M685.4,72.4 L680.6,71.6 L682,70.2 L678.8,67 L680,65.8 L683.2,69 L684.6,67.6 Z"/></g>
<path d="M703.5,58.6 L706.9,54.4 L716.2,52.1 L720.9,53.6 L726.1,60.2 L724.1,64.8 L711.5,71.6 L705.8,66.4 Z" fill="#a9a898" stroke="#1c1c18" stroke-width="0.9" stroke-linejoin="round"/>
<path d="M705.8,66.4 L711.5,67.4 L724.1,64.8 L711.5,71.6 Z" fill="#4a483c"/>
<path d="M707.4,66.2 L711.4,70 M710.4,65.6 L714.4,68.6 M714,65.4 L717.6,67.4 M717.6,64.8 L720.6,66.2" stroke="#1c1c18" stroke-width="0.6" fill="none"/>
<path d="M709.2,56.2 L716.2,53.6 L720.9,59.1 L720.4,63.8 L711.5,66.9 L709.2,61.7 Z" fill="#e02028" stroke="#7c0d13" stroke-width="0.5" stroke-linejoin="round"/>
<path d="M709.2,56.2 L716.2,53.6 L720.9,59.1 L713.4,61.6 Z" fill="#ea3a40"/>
<path d="M711.4,57.4 L716.2,55.8 L718.8,58.8 M712.2,59.6 L716,58.4 L717.4,60.2 M712.6,62.2 L714.6,61.6 M713,64.6 L714.2,64.2" stroke="#fff" stroke-width="1.1" fill="none"/>
<path d="M737.1,58.6 L740.7,53.9 L750.1,51.8 L755.3,53.4 L761.1,60.2 L759,64.8 L745.4,71.6 L739.7,66.9 Z" fill="#f6f6f6" stroke="#1c1c18" stroke-width="0.9" stroke-linejoin="round"/>
<path d="M739.7,66.9 L745.4,67.6 L759,64.8 L745.4,71.6 Z" fill="#6a6656"/>
<path d="M739.7,58.6 L743.3,55.2 L753.2,54.4 L757.4,58.6 L748,65.6 Z" fill="#e01018" stroke="#3a0004" stroke-width="0.6" stroke-linejoin="round"/>
<path d="M743.3,55.4 L753.2,54.6 L755.6,57.2 L741.6,57.6 Z" fill="#f07078"/>
<path d="M739.7,58.6 L757.4,58.6 M744.4,58.6 L748,65.6 L752.4,58.6 M744.4,58.6 L743.3,55.2 M752.4,58.6 L753.2,54.4 M748.4,54.8 L748.4,58.6" stroke="#3a0004" stroke-width="0.45" fill="none"/>
<path d="M750.6,55.6 L752.6,57.8 M752.6,55.6 L750.6,57.8" stroke="#fff2c8" stroke-width="0.6"/>
<path d="M771.7,55.2 L787.6,51 L794.4,66.6 L775.1,71.6 Z" fill="#f8262e"/>
<path d="M774,57 L785.4,54 M774.6,59 L787.8,55.4 M786.4,53.4 L791,64 M788.6,52.8 L793,63" stroke="#fff" stroke-width="0.9" fill="none"/>
<rect x="776.4" y="61" width="8.4" height="7.4" fill="#fff" transform="rotate(-15 780.6 64.7)"/>
<circle cx="779.4" cy="65.2" r="1.9" fill="none" stroke="#f8262e" stroke-width="0.9"/>
<path d="M781.1,64.8 L788.7,64.8 L788.7,62 L794.9,67.7 L788.7,72.9 L788.7,70.3 L781.1,70.3 Z" fill="#1890f0" stroke="#101010" stroke-width="0.8" stroke-linejoin="round"/>
</svg>
<div class="b" style="left:1640px;top:81px;width:279px;height:18px;background:linear-gradient(#bccde0,#dfe8f2);"></div>
<span class="t" style="left:1644.30px;top:90.60px;font-size:12px;color:#000;letter-spacing:-0.446px;">Default Tray</span>
<svg class="b" style="left:1887px;top:86px" width="9" height="10" viewBox="0 0 9 10"><path d="M2.2,0.6 L6.2,0.6 L6.2,5 L2.2,5 Z M0.6,5.4 L8,5.4 M4.3,5.4 L4.3,9.2" fill="none" stroke="#000" stroke-width="1.2"/><rect x="4.6" y="0.8" width="1.6" height="4.4" fill="#000"/></svg>
<div class="b" style="left:1904px;top:85px;width:12px;height:12px;background:#c5494f;"></div>
<svg class="b" style="left:1906px;top:87px" width="8" height="8" viewBox="0 0 8 8"><path d="M1.2,1.2 L6.8,6.8 M6.8,1.2 L1.2,6.8" stroke="#fff" stroke-width="1.7" fill="none"/></svg>
<div class="b" style="left:1904px;top:100px;width:15px;height:911px;background:#f0f0f0;"></div>
<svg class="b" style="left:1906.5px;top:106px" width="10" height="8" viewBox="0 0 10 8"><path d="M1,6 L5,2 L9,6" fill="none" stroke="#606060" stroke-width="1.8"/></svg>
<div class="b" style="left:1904px;top:118px;width:15px;height:17px;background:#c8c8c8;"></div>
<svg class="b" style="left:1906.5px;top:1001px" width="10" height="8" viewBox="0 0 10 8"><path d="M1,2 L5,6 L9,2" fill="none" stroke="#606060" stroke-width="1.8"/></svg>
<div class="b" style="left:1640px;top:101px;width:263px;height:17px;background:linear-gradient(#f6f6f6 0%,#e4e4e4 30%,#cfcfcf 65%,#b2b2b2 100%);border-left:1px solid #8a8a8a;border-right:1px solid #a8a8a8;border-bottom:1px solid #a6a6a6;"></div>
<svg class="b" style="left:1648px;top:105.4px" width="9" height="8" viewBox="0 0 9 8"><path d="M0.6,0.6 L7.6,0.6 L4.1,7.2 Z" fill="#000"/></svg>
<span class="t" style="left:1662.80px;top:108.90px;font-size:12px;color:#000;letter-spacing:-0.019px;">Entity Info</span>
<div class="b" style="left:1887px;top:102px;width:13px;height:13px;background:#e6e6e6;border:1px solid #9c9c9c;box-shadow:0 0 0 1px #f6f6f6;"></div>
<svg class="b" style="left:1890px;top:106px" width="8" height="8" viewBox="0 0 8 8"><path d="M1.4,1.6 L6.2,5.8 M6.2,1.6 L1.4,5.8" stroke="#000" stroke-width="1.2" fill="none"/></svg>
<span class="t" style="left:1649.00px;top:131.50px;font-size:12px;color:#000;font-weight:700;letter-spacing:-0.350px;">No Selection</span>
<svg class="b" style="left:1886px;top:123px" width="11" height="16" viewBox="0 0 11 16"><rect x="0.5" y="0.5" width="10" height="7" fill="#fff" stroke="#d8d8d8"/><path d="M2,2 L9,2 L5.5,6.2 Z" fill="#000"/><rect x="0.5" y="7.5" width="10" height="8" fill="#000"/><path d="M5.5,9 L5.5,14 M3,11.5 L8,11.5" stroke="#fff" stroke-width="1.4"/></svg>
<div class="b" style="left:1642px;top:143px;width:259px;height:1px;background:#a0a0a0;"></div>
<div class="b" style="left:1640px;top:267px;width:263px;height:17px;background:linear-gradient(#f6f6f6 0%,#e4e4e4 30%,#cfcfcf 65%,#b2b2b2 100%);border-left:1px solid #8a8a8a;border-right:1px solid #a8a8a8;border-bottom:1px solid #a6a6a6;"></div>
<svg class="b" style="left:1648px;top:271.4px" width="9" height="8" viewBox="0 0 9 8"><path d="M0.6,0.6 L7.6,0.6 L4.1,7.2 Z" fill="#000"/></svg>
<span class="t" style="left:1662.80px;top:274.90px;font-size:12px;color:#000;letter-spacing:-0.147px;">Materials</span>
<div class="b" style="left:1887px;top:268px;width:13px;height:13px;background:#e6e6e6;border:1px solid #9c9c9c;box-shadow:0 0 0 1px #f6f6f6;"></div>
<svg class="b" style="left:1890px;top:272px" width="8" height="8" viewBox="0 0 8 8"><path d="M1.4,1.6 L6.2,5.8 M6.2,1.6 L1.4,5.8" stroke="#000" stroke-width="1.2" fill="none"/></svg>
<div class="b" style="left:1642px;top:286px;width:66px;height:71px;background:#fff;border:1px solid #9a9a9a;box-shadow:inset 0 1px 0 #f0f0f0, inset 0 -1px 0 #f0f0f0;"></div>
<svg class="b" style="left:1696px;top:342px" width="10" height="10" viewBox="0 0 10 10"><path d="M1,9 L9,9 L9,1 Z" fill="#fff" stroke="#d4d4d4" stroke-width="1"/></svg>
<div class="b" style="left:1711px;top:286px;width:163px;height:19px;background:#fff;border-top:1px solid #6a6a6a;border-left:1px solid #6a6a6a;border-right:1px solid #e3e3e3;border-bottom:1px solid #e3e3e3;box-shadow:inset 1px 1px 0 #a0a0a0;"></div>
<span class="t" style="left:1716.80px;top:295.60px;font-size:11px;color:#000;letter-spacing:-0.267px;">Color_000</span>
<svg class="b" style="left:1885px;top:288px" width="11" height="16" viewBox="0 0 11 16"><rect x="0.5" y="0.5" width="10" height="7" fill="#fff" stroke="#d8d8d8"/><path d="M2,2 L9,2 L5.5,6.2 Z" fill="#000"/><rect x="0.5" y="7.5" width="10" height="8" fill="#000"/><path d="M5.5,9 L5.5,14 M3,11.5 L8,11.5" stroke="#fff" stroke-width="1.4"/></svg>
<svg class="b" style="left:1879px;top:309px" width="21" height="22" viewBox="1879 309 21 22">
<path d="M1883,315.4 L1891.6,311 L1898,314 L1897.6,321.4 L1889.4,328.6 L1883.4,323.4 Z" fill="#1e1c18" stroke="#0c0c0c" stroke-width="0.8" stroke-linejoin="round"/>
<path d="M1885.2,315 L1892,311.8 L1893.8,312.6 L1887,316 Z M1888.6,316.8 L1895.2,313.4 L1896.8,314.2 L1890.2,317.8 Z" fill="#efe8c0"/>
<path d="M1890.2,321 L1897.4,316.4 M1890.2,323.4 L1897.4,318.8 M1890,325.8 L1896.6,321.2" stroke="#a59c6c" stroke-width="0.6"/>
<path d="M1883.6,318.4 L1889.6,321.4 M1883.6,320.6 L1889.6,323.8" stroke="#6c6648" stroke-width="0.5"/>
<circle cx="1885.5" cy="324.8" r="4.5" fill="#fff" stroke="#111" stroke-width="1"/>
<path d="M1885.5,321.8 L1885.5,327.8 M1882.5,324.8 L1888.5,324.8" stroke="#111" stroke-width="1.2"/></svg>
<svg class="b" style="left:1879px;top:334px" width="22" height="22" viewBox="0 0 22 22"><rect width="22" height="22" fill="#fff"/><path d="M0,0 L22,22 L0,22 Z" fill="#a2b1bf"/></svg>
<div class="b" style="left:1640px;top:359px;width:263px;height:1px;background:#a0a0a0;"></div>
<div class="b" style="left:1640px;top:366px;width:44px;height:21px;background:#f0f0f0;border-top:1px solid #fff;border-left:1px solid #fff;border-right:1px solid #696969;box-shadow:1px 0 0 #a0a0a0;"></div>
<div class="b" style="left:1685px;top:368px;width:39px;height:18px;background:#f0f0f0;border-top:1px solid #fff;border-right:1px solid #696969;box-shadow:1px 0 0 #a0a0a0;"></div>
<div class="b" style="left:1685px;top:385px;width:218px;height:1px;background:#fff;"></div>
<span class="t" style="left:1646.60px;top:374.60px;font-size:11px;color:#000;letter-spacing:-0.303px;">Select</span>
<span class="t" style="left:1688.60px;top:376.40px;font-size:11px;color:#000;letter-spacing:-0.299px;">Edit</span>
<svg class="b" style="left:1880px;top:362px" width="20" height="20" viewBox="1880 362 20 20">
<path d="M1882.2,379.6 L1883.6,376.6 L1886,374 L1887.6,375.6 L1885,378.2 Z" fill="#f2b21c" stroke="#3a3a3a" stroke-width="0.6"/>
<path d="M1886,374 L1890.8,369 L1892.6,370.8 L1887.6,375.6 Z" fill="#f6f6f6" stroke="#2a2a2a" stroke-width="0.8"/>
<path d="M1889.2,368.4 L1893.4,372.4" stroke="#222" stroke-width="1.8"/>
<path d="M1890.8,368 L1893.4,364.8 Q1895.6,363 1897,364.6 Q1898.2,366.4 1896.6,368.2 L1893.4,370.8 Z" fill="#4a4a4a" stroke="#222" stroke-width="0.8"/></svg>
<svg class="b" style="left:1646px;top:392px" width="68" height="20" viewBox="1646 392 68 20">
<path d="M1649,401 L1655,395 L1655,398.4 L1659.4,398.4 L1659.4,403.6 L1655,403.6 L1655,407 Z" fill="#fff" stroke="#8a8a8a" stroke-width="1"/>
<path d="M1683.6,401 L1677.6,395 L1677.6,398.4 L1672.6,398.4 L1672.6,403.6 L1677.6,403.6 L1677.6,407 Z" fill="#fff" stroke="#8a8a8a" stroke-width="1"/>
<path d="M1694.6,402 L1702.2,394.6 L1709.8,402" fill="none" stroke="#111" stroke-width="1.5"/>
<path d="M1696.4,400.6 L1696.4,408.6 L1708,408.6 L1708,400.6" fill="#fff" stroke="#111" stroke-width="1.3"/>
<rect x="1700.4" y="403" width="3.8" height="5.6" fill="#111"/><rect x="1697.6" y="394.6" width="1.6" height="3" fill="#111"/></svg>
<div class="b" style="left:1715px;top:393px;width:160px;height:22px;background:#fff;border-top:2px solid #6a6a6a;border-left:2px solid #6a6a6a;border-right:1px solid #e3e3e3;border-bottom:1px solid #e3e3e3;"></div>
<span class="t" style="left:1720.00px;top:403.70px;font-size:11px;color:#000;letter-spacing:0.084px;">Colors&lt;1&gt;</span>
<div class="b" style="left:1721px;top:413px;width:133px;height:1px;background:#000;"></div>
<div class="b" style="left:1858px;top:395px;width:16px;height:19px;background:#f0f0f0;border-top:1px solid #fff;border-left:1px solid #fff;border-right:1px solid #696969;border-bottom:1px solid #696969;box-shadow:inset -1px -1px 0 #a0a0a0;"></div>
<svg class="b" style="left:1862px;top:402px" width="8" height="5" viewBox="0 0 8 5"><path d="M0.3,0.3 L7.3,0.3 L3.8,4.4 Z" fill="#000"/></svg>
<svg class="b" style="left:1883px;top:393px" width="17" height="17" viewBox="1883 393 17 17">
<path d="M1889,394 L1897.6,401.2 L1889,408.6 L1889,405 L1884.4,405 L1884.4,397.6 L1889,397.6 Z" fill="#111"/>
<rect x="1885.4" y="398.8" width="4.6" height="5" fill="#fff"/><rect x="1885.4" y="398.8" width="4.6" height="1.6" fill="#3a6fd0"/></svg>
<div class="b" style="left:1640px;top:417px;width:263px;height:1px;background:#a0a0a0;"></div>
<div class="b" style="left:1640px;top:418px;width:247px;height:198px;background:#fff;overflow:hidden;"></div>
<div class="b" style="left:1643px;top:419px;width:50px;height:50px;background:#ffffff;border:1px solid #a0a0a0;box-shadow:inset 0 0 0 1px #fff"></div>
<div class="b" style="left:1695px;top:419px;width:50px;height:50px;background:#e1e1e1;border:1px solid #a0a0a0;box-shadow:inset 0 0 0 1px #fff"></div>
<div class="b" style="left:1747px;top:419px;width:50px;height:50px;background:#c4c4c4;border:1px solid #a0a0a0;box-shadow:inset 0 0 0 1px #fff"></div>
<div class="b" style="left:1799px;top:419px;width:50px;height:50px;background:#aaaaaa;border:1px solid #a0a0a0;box-shadow:inset 0 0 0 1px #fff"></div>
<div class="b" style="left:1643px;top:471px;width:50px;height:50px;background:#8d8d8d;border:1px solid #a0a0a0;box-shadow:inset 0 0 0 1px #fff"></div>
<div class="b" style="left:1695px;top:471px;width:50px;height:50px;background:#717171;border:1px solid #a0a0a0;box-shadow:inset 0 0 0 1px #fff"></div>
<div class="b" style="left:1747px;top:471px;width:50px;height:50px;background:#555555;border:1px solid #a0a0a0;box-shadow:inset 0 0 0 1px #fff"></div>
<div class="b" style="left:1799px;top:471px;width:50px;height:50px;background:#3a3a3a;border:1px solid #a0a0a0;box-shadow:inset 0 0 0 1px #fff"></div>
<div class="b" style="left:1643px;top:523px;width:50px;height:50px;background:#1c1c1c;border:1px solid #a0a0a0;box-shadow:inset 0 0 0 1px #fff"></div>
<div class="b" style="left:1695px;top:523px;width:50px;height:50px;background:#000000;border:1px solid #a0a0a0;box-shadow:inset 0 0 0 1px #fff"></div>
<div class="b" style="left:1747px;top:523px;width:50px;height:50px;background:#ff0000;border:1px solid #a0a0a0;box-shadow:inset 0 0 0 1px #fff"></div>
<div class="b" style="left:1799px;top:523px;width:50px;height:50px;background:#ff3333;border:1px solid #a0a0a0;box-shadow:inset 0 0 0 1px #fff"></div>
<div class="b" style="left:1643px;top:575px;width:50px;height:41px;background:#ff6666;border:1px solid #a0a0a0;border-bottom:0;box-shadow:inset 0 0 0 1px #fff"></div>
<div class="b" style="left:1695px;top:575px;width:50px;height:41px;background:#ff9999;border:1px solid #a0a0a0;border-bottom:0;box-shadow:inset 0 0 0 1px #fff"></div>
<div class="b" style="left:1747px;top:575px;width:50px;height:41px;background:#ffcccc;border:1px solid #a0a0a0;border-bottom:0;box-shadow:inset 0 0 0 1px #fff"></div>
<div class="b" style="left:1799px;top:575px;width:50px;height:41px;background:#cc0000;border:1px solid #a0a0a0;border-bottom:0;box-shadow:inset 0 0 0 1px #fff"></div>
<div class="b" style="left:1887px;top:418px;width:16px;height:198px;background:#f0f0f0;"></div>
<svg class="b" style="left:1889.5px;top:422px" width="10" height="8" viewBox="0 0 10 8"><path d="M1,6 L5,2 L9,6" fill="none" stroke="#606060" stroke-width="1.8"/></svg>
<div class="b" style="left:1887px;top:434px;width:15px;height:17px;background:#c8c8c8;"></div>
<svg class="b" style="left:1889.5px;top:603px" width="10" height="8" viewBox="0 0 10 8"><path d="M1,2 L5,6 L9,2" fill="none" stroke="#606060" stroke-width="1.8"/></svg>
<div class="b" style="left:1640px;top:616px;width:263px;height:2px;background:#f4f4f4;"></div>
<div class="b" style="left:1640px;top:618px;width:263px;height:2px;background:linear-gradient(#6e6e6e,#a0a0a0);"></div>
<div class="b" style="left:1640px;top:622px;width:263px;height:18px;background:linear-gradient(#f6f6f6 0%,#e4e4e4 30%,#cfcfcf 65%,#b2b2b2 100%);border-top:1px solid #f2f2f2;border-left:1px solid #8a8a8a;border-right:1px solid #a8a8a8;border-bottom:1px solid #a6a6a6;"></div>
<svg class="b" style="left:1648px;top:626.6px" width="8" height="9" viewBox="0 0 8 9"><path d="M0.8,0.7 L7.2,4.2 L0.8,7.7 Z" fill="#000"/></svg>
<span class="t" style="left:1662.80px;top:630.90px;font-size:12px;color:#000;">Components</span>
<div class="b" style="left:1887px;top:624px;width:13px;height:13px;background:#e6e6e6;border:1px solid #9c9c9c;box-shadow:0 0 0 1px #f6f6f6;"></div>
<svg class="b" style="left:1890px;top:628px" width="8" height="8" viewBox="0 0 8 8"><path d="M1.4,1.6 L6.2,5.8 M6.2,1.6 L1.4,5.8" stroke="#000" stroke-width="1.2" fill="none"/></svg>
<div class="b" style="left:1640px;top:641px;width:263px;height:18px;background:linear-gradient(#f6f6f6 0%,#e4e4e4 30%,#cfcfcf 65%,#b2b2b2 100%);border-top:1px solid #f2f2f2;border-left:1px solid #8a8a8a;border-right:1px solid #a8a8a8;border-bottom:1px solid #a6a6a6;"></div>
<svg class="b" style="left:1648px;top:645.6px" width="8" height="9" viewBox="0 0 8 9"><path d="M0.8,0.7 L7.2,4.2 L0.8,7.7 Z" fill="#000"/></svg>
<span class="t" style="left:1662.80px;top:649.90px;font-size:12px;color:#000;letter-spacing:-0.736px;">Styles</span>
<div class="b" style="left:1887px;top:643px;width:13px;height:13px;background:#e6e6e6;border:1px solid #9c9c9c;box-shadow:0 0 0 1px #f6f6f6;"></div>
<svg class="b" style="left:1890px;top:647px" width="8" height="8" viewBox="0 0 8 8"><path d="M1.4,1.6 L6.2,5.8 M6.2,1.6 L1.4,5.8" stroke="#000" stroke-width="1.2" fill="none"/></svg>
<div class="b" style="left:1640px;top:660px;width:263px;height:18px;background:linear-gradient(#f6f6f6 0%,#e4e4e4 30%,#cfcfcf 65%,#b2b2b2 100%);border-top:1px solid #f2f2f2;border-left:1px solid #8a8a8a;border-right:1px solid #a8a8a8;border-bottom:1px solid #a6a6a6;"></div>
<svg class="b" style="left:1648px;top:664.6px" width="8" height="9" viewBox="0 0 8 9"><path d="M0.8,0.7 L7.2,4.2 L0.8,7.7 Z" fill="#000"/></svg>
<span class="t" style="left:1662.80px;top:668.90px;font-size:12px;color:#000;letter-spacing:-0.561px;">Shadows</span>
<div class="b" style="left:1887px;top:662px;width:13px;height:13px;background:#e6e6e6;border:1px solid #9c9c9c;box-shadow:0 0 0 1px #f6f6f6;"></div>
<svg class="b" style="left:1890px;top:666px" width="8" height="8" viewBox="0 0 8 8"><path d="M1.4,1.6 L6.2,5.8 M6.2,1.6 L1.4,5.8" stroke="#000" stroke-width="1.2" fill="none"/></svg>
<div class="b" style="left:1640px;top:679px;width:263px;height:18px;background:linear-gradient(#f6f6f6 0%,#e4e4e4 30%,#cfcfcf 65%,#b2b2b2 100%);border-top:1px solid #f2f2f2;border-left:1px solid #8a8a8a;border-right:1px solid #a8a8a8;border-bottom:1px solid #a6a6a6;"></div>
<svg class="b" style="left:1648px;top:684.4px" width="9" height="8" viewBox="0 0 9 8"><path d="M0.6,0.6 L7.6,0.6 L4.1,7.2 Z" fill="#000"/></svg>
<span class="t" style="left:1661.80px;top:687.90px;font-size:12px;color:#000;letter-spacing:0.109px;">Instructor</span>
<div class="b" style="left:1887px;top:681px;width:13px;height:13px;background:#e6e6e6;border:1px solid #9c9c9c;box-shadow:0 0 0 1px #f6f6f6;"></div>
<svg class="b" style="left:1890px;top:685px" width="8" height="8" viewBox="0 0 8 8"><path d="M1.4,1.6 L6.2,5.8 M6.2,1.6 L1.4,5.8" stroke="#000" stroke-width="1.2" fill="none"/></svg>
<div class="b" style="left:1640px;top:697px;width:247px;height:316px;background:#fff;overflow:hidden;"></div>
<div class="b" style="left:1887px;top:697px;width:16px;height:316px;background:#f0f0f0;"></div>
<svg class="b" style="left:1889px;top:713px" width="13" height="10" viewBox="0 0 10 8"><path d="M1,6 L5,2 L9,6" fill="none" stroke="#505050" stroke-width="1.8"/></svg>
<div class="b" style="left:1887px;top:731px;width:15px;height:282px;background:#c8c8c8;"></div>
<svg class="b" style="left:1690px;top:725px" width="180" height="150" viewBox="1690 725 180 150" fill="none" stroke="#000" stroke-linejoin="round" stroke-linecap="round">
<g stroke-width="1.7">
<path d="M1778.5,731 L1697.9,804.4 L1701.8,839.1 L1781.3,849.3 L1793.2,822 L1837.6,826 L1843.1,764.9 L1773.8,759.8"/>
<path d="M1778.5,731 L1809.5,759.1 L1809.2,761.6"/>
</g>
<g stroke-width="0.9">
<path d="M1774.6,735.6 L1737.5,776.5 L1697.9,804.4"/>
<path d="M1737.5,776.5 L1781.3,812.6 L1781.3,849.3"/>
<path d="M1781.3,812.6 L1793.2,789.7 L1773.8,759.8"/>
<path d="M1793.2,789.7 L1839,793.8"/>
<path d="M1793.2,789.7 L1793.2,822"/>
</g></svg>
<svg class="b" style="left:1843px;top:847px" width="30" height="31" viewBox="1843 847 30 31"><g transform="translate(1285.5 799.5)" stroke="#2a261e" stroke-width="0.9" stroke-linejoin="round">
<path d="M561,61.4 Q561.4,57.2 568.4,56 L567.2,58.4 L569,60 Q565.4,60.4 564.6,62.4 Q562.6,62.6 561,61.4 Z" fill="#e8bcb8"/>
<path d="M573.8,54.2 L574.4,56 Q582.4,56.8 582.9,60.8 Q581,62.6 578,63 Q578.6,60.8 574.4,60.4 L574,63 L569.4,58.6 Z" fill="#aee8c4"/>
<path d="M561,61.6 Q563,63.4 565.6,63.6 Q567,65 569.6,65.4 L569.4,63.6 L574.8,67 L569.8,72 L569.6,70 Q562.2,69.4 561.3,65.6 Z" fill="#c8505a"/>
<path d="M582.9,61 L582.7,64.8 Q581.6,68.6 575.4,69.6 L576.8,66.8 L575.4,65 Q579.6,64.8 580.6,63 Q582,62.4 582.9,61 Z" fill="#c4ecd2"/>
<path d="M572,50 L572,76" fill="none" stroke="#111" stroke-width="1.4"/>
</g></svg>
<span class="t" style="left:1666.40px;top:916.80px;font-size:19.5px;color:#000;font-weight:700;letter-spacing:0.113px;">Orbit Tool</span>
<span class="t" style="left:1668.20px;top:933.70px;font-size:12.4px;color:#9a9a9a;letter-spacing:0.324px;">Rotate camera about model.</span>
<span class="t" style="left:1667.40px;top:968.30px;font-size:13.6px;color:#3c3c3c;font-weight:700;letter-spacing:0.512px;">Tool Operation</span>
<span class="t" style="left:1663.00px;top:984.80px;font-size:12px;color:#9a9a9a;letter-spacing:-0.674px;">1.</span>
<span class="t" style="left:1685.80px;top:984.80px;font-size:12.4px;color:#9a9a9a;letter-spacing:0.207px;">Click anywhere in drawing</span>
<span class="t" style="left:1685.80px;top:1000.50px;font-size:12.4px;color:#9a9a9a;letter-spacing:-0.125px;">area.</span>
<div class="b" style="left:1640px;top:1000px;width:247px;height:13px;overflow:hidden"><span class="t" style="left:23.00px;top:15.80px;font-size:12.4px;color:#9a9a9a;letter-spacing:-0.491px;">2.</span><span class="t" style="left:44.80px;top:15.80px;font-size:12.4px;color:#9a9a9a;letter-spacing:0.146px;">Move cursor in any direction</span></div>
<div class="b" style="left:0px;top:1013px;width:1636px;height:27px;background:#f0f0f0;"></div>
<div class="b" style="left:1636px;top:1013px;width:283px;height:27px;background:#f0f0f0;"></div>
<div class="b" style="left:0px;top:1038px;width:1919px;height:2px;background:#fbfbfb;"></div>
<svg class="b" style="left:0;top:1014px" width="100" height="24" viewBox="0 1014 100 24">
<circle cx="13" cy="1026" r="6.6" fill="#f4f4f4" stroke="#a6a6a6" stroke-width="1"/>
<path d="M13,1021.6 Q16,1021.8 15.8,1024.6 Q15.2,1026.8 13.8,1028.2 L13.6,1030.4 L12.4,1030.4 L12.2,1028.2 Q10.8,1026.8 10.2,1024.6 Q10,1021.8 13,1021.6 Z" fill="#9e9e9e"/>
<circle cx="43" cy="1026" r="6.6" fill="#f4f4f4" stroke="#000" stroke-width="1.4"/>
<circle cx="43" cy="1022.8" r="1.2" fill="#000"/><path d="M41.2,1025 L44.8,1025 L44.4,1028 L44,1028 L44,1030.6 L42,1030.6 L42,1028 L41.6,1028 Z" fill="#000"/>
<circle cx="73" cy="1026" r="6.6" fill="#f4f4f4" stroke="#000" stroke-width="1.4"/>
<circle cx="73" cy="1023.6" r="2.5" fill="#000"/><path d="M68.4,1030.4 Q69,1026.8 73,1026.8 Q77,1026.8 77.6,1030.4 Q75.6,1032.4 73,1032.4 Q70.4,1032.4 68.4,1030.4 Z" fill="#000"/>
<rect x="92" y="1022" width="1" height="9.5" fill="#8a8a8a"/>
</svg>
<span class="t" style="left:102.70px;top:1028.00px;font-size:12.5px;color:#000;letter-spacing:0.380px;">Drag to orbit. Shift = Pan, Ctrl = suspend gravity.</span>
<div class="b" style="left:1609px;top:1022px;width:1px;height:10px;background:#9a9a9a;"></div>
<span class="t" style="left:1619.50px;top:1028.00px;font-size:12.5px;color:#000;letter-spacing:0.280px;">Measurements</span>
<div class="b" style="left:1715px;top:1015px;width:200px;height:24px;background:#f0f0f0;border:1px solid #a9bcd8;"></div>
<div class="b" style="left:0px;top:1040px;width:1919px;height:39px;background:#101010;"></div>
<div class="b" style="left:48px;top:1040px;width:344px;height:39px;background:#3f3f3f;"></div>
<svg class="b" style="left:14px;top:1050px" width="20" height="20" viewBox="14 1050 20 20">
<path d="M16,1054.3 L22.4,1053.4 L22.4,1059.6 L16,1059.6 Z M23.2,1053.3 L32,1052 L32,1059.6 L23.2,1059.6 Z M16,1060.4 L22.4,1060.4 L22.4,1066.6 L16,1065.7 Z M23.2,1060.4 L32,1060.4 L32,1068 L23.2,1066.7 Z" fill="#fff"/></svg>
<svg class="b" style="left:56px;top:1048px" width="24" height="24" viewBox="0 0 24 24"><circle cx="12" cy="12" r="8.6" fill="none" stroke="#fff" stroke-width="2.6"/></svg>
<span class="t" style="left:88.20px;top:1060.90px;font-size:14.6px;color:#a6a6a6;letter-spacing:0.016px;">Ask me anything</span>
<svg class="b" style="left:364px;top:1050px" width="15" height="20" viewBox="364 1050 15 20" fill="none" stroke="#8c8c8c" stroke-width="1">
<rect x="369.5" y="1052" width="4" height="10" rx="2"/><path d="M367,1059 Q367,1064.6 371.5,1064.6 Q376,1064.6 376,1059 M371.5,1064.6 L371.5,1067.6 M369,1067.6 L374,1067.6"/></svg>
<svg class="b" style="left:404px;top:1051px" width="24" height="18" viewBox="404 1051 24 18" fill="none" stroke="#fff" stroke-width="1.2">
<rect x="410.2" y="1053.6" width="11.6" height="13"/><path d="M408,1055.4 L406.4,1055.4 L406.4,1064.8 L408,1064.8 M424,1055.4 L425.6,1055.4 L425.6,1064.8 L424,1064.8"/></svg>
<svg class="b" style="left:454px;top:1049px" width="24" height="22" viewBox="454 1049 24 22">
<path d="M455.4,1051.4 L463.6,1051.4 L465,1053.2 L476.4,1053.2 L476.4,1068.6 L455.4,1068.6 Z" fill="#f3c14f"/>
<path d="M455.4,1055 L476.4,1055 L476.4,1068.6 L455.4,1068.6 Z" fill="#fbd974"/>
<path d="M455.4,1051.4 L463.6,1051.4 L464.6,1052.6 L455.4,1052.6 Z" fill="#e8a92d"/>
<path d="M459.4,1062 L472.4,1062 L472.4,1068.8 L469,1068.8 L469,1065 L462.8,1065 L462.8,1068.8 L459.4,1068.8 Z" fill="#1f9be0"/>
<path d="M459.4,1062 L472.4,1062 L472.4,1063.4 L459.4,1063.4 Z" fill="#42b4f0"/></svg>
<svg class="b" style="left:503px;top:1048px" width="24" height="24" viewBox="-12 -12 24 24">
<circle r="11" fill="#f2c230"/>
<path d="M0,0 L-9.53,-5.5 A11,11 0 0 1 9.53,-5.5 Z" fill="#dc4b3e"/>
<path d="M0,0 L-9.53,-5.5 A11,11 0 0 0 0,11 L4.6,2.7 Z" fill="#1a9f5b"/>
<path d="M-9.53,-5.5 A11,11 0 0 1 9.53,-5.5 L0,-5.2 Z" fill="#dc4b3e"/>
<circle r="5.2" fill="#fff"/><circle r="4.1" fill="#4a8cf0"/></svg>
<svg class="b" style="left:552px;top:1048px" width="24" height="24" viewBox="0 0 24 24"><rect x="10" y="3.4" width="12.6" height="17.4" fill="#fff" stroke="#2a5699" stroke-width="0.9"/><rect x="14.4" y="5.6" width="6.6" height="1.1" fill="#2a5699"/><rect x="14.4" y="7.8999999999999995" width="6.6" height="1.1" fill="#2a5699"/><rect x="14.4" y="10.2" width="6.6" height="1.1" fill="#2a5699"/><rect x="14.4" y="12.5" width="6.6" height="1.1" fill="#2a5699"/><rect x="14.4" y="14.799999999999999" width="6.6" height="1.1" fill="#2a5699"/><rect x="14.4" y="17.1" width="6.6" height="1.1" fill="#2a5699"/><path d="M0.6,3.2 L14,0.6 L14,23.4 L0.6,20.8 Z" fill="#2a5699"/><text x="7.3" y="15.8" text-anchor="middle" font-family="&quot;Liberation Sans&quot;, sans-serif" font-weight="700" font-size="10" fill="#fff">W</text></svg>
<svg class="b" style="left:601px;top:1048px" width="24" height="24" viewBox="0 0 24 24"><rect x="10" y="3.4" width="12.6" height="17.4" fill="#fff" stroke="#d24625" stroke-width="0.9"/><circle cx="17.6" cy="9" r="3.4" fill="#d24625"/><path d="M17.6,9 L17.6,5 A4,4 0 0 1 21.6,9 Z" fill="#fff"/><rect x="14.4" y="14.4" width="6.6" height="1.1" fill="#d24625"/><rect x="14.4" y="16.8" width="6.6" height="1.1" fill="#d24625"/><path d="M0.6,3.2 L14,0.6 L14,23.4 L0.6,20.8 Z" fill="#d24625"/><text x="7.3" y="15.8" text-anchor="middle" font-family="&quot;Liberation Sans&quot;, sans-serif" font-weight="700" font-size="10" fill="#fff">P</text></svg>
<svg class="b" style="left:650px;top:1048px" width="24" height="24" viewBox="0 0 24 24"><rect x="10" y="3.4" width="12.6" height="17.4" fill="#fff" stroke="#077467" stroke-width="0.9"/><rect x="15.4" y="5.4" width="5.4" height="5" fill="none" stroke="#077467" stroke-width="0.9"/><rect x="14.4" y="12.6" width="6.6" height="1.1" fill="#077467"/><rect x="14.4" y="14.9" width="6.6" height="1.1" fill="#077467"/><rect x="14.4" y="17.2" width="6.6" height="1.1" fill="#077467"/><path d="M0.6,3.2 L14,0.6 L14,23.4 L0.6,20.8 Z" fill="#077467"/><text x="7.3" y="15.8" text-anchor="middle" font-family="&quot;Liberation Sans&quot;, sans-serif" font-weight="700" font-size="10" fill="#fff">P</text></svg>
<svg class="b" style="left:699px;top:1048px" width="24" height="24" viewBox="0 0 24 24"><rect x="10" y="3.4" width="12.6" height="17.4" fill="#fff" stroke="#1f7244" stroke-width="0.9"/><rect x="14.2" y="5.0" width="3" height="1.4" fill="#1f7244"/><rect x="18.2" y="5.0" width="3" height="1.4" fill="#1f7244"/><rect x="14.2" y="7.5" width="3" height="1.4" fill="#1f7244"/><rect x="18.2" y="7.5" width="3" height="1.4" fill="#1f7244"/><rect x="14.2" y="10.0" width="3" height="1.4" fill="#1f7244"/><rect x="18.2" y="10.0" width="3" height="1.4" fill="#1f7244"/><rect x="14.2" y="12.5" width="3" height="1.4" fill="#1f7244"/><rect x="18.2" y="12.5" width="3" height="1.4" fill="#1f7244"/><rect x="14.2" y="15.0" width="3" height="1.4" fill="#1f7244"/><rect x="18.2" y="15.0" width="3" height="1.4" fill="#1f7244"/><rect x="14.2" y="17.5" width="3" height="1.4" fill="#1f7244"/><rect x="18.2" y="17.5" width="3" height="1.4" fill="#1f7244"/><path d="M0.6,3.2 L14,0.6 L14,23.4 L0.6,20.8 Z" fill="#1f7244"/><text x="7.3" y="15.8" text-anchor="middle" font-family="&quot;Liberation Sans&quot;, sans-serif" font-weight="700" font-size="10" fill="#fff">X</text></svg>
<svg class="b" style="left:750px;top:1047px" width="20" height="26" viewBox="750 1047 20 26"><rect x="750.8" y="1047.8" width="18.2" height="24.2" fill="#fff"/><rect x="753" y="1050.2" width="13.8" height="3.2" fill="#101010"/><path d="M754.0,1056.4 L756.8000000000001,1056.4 L756.8000000000001,1056.8000000000002 L754.6,1058.8000000000002 L753.2,1058.8000000000002 L753.2,1057.2 Z" fill="#101010"/><path d="M759.0,1056.4 L761.8000000000001,1056.4 L761.8000000000001,1056.8000000000002 L759.6,1058.8000000000002 L758.2,1058.8000000000002 L758.2,1057.2 Z" fill="#101010"/><path d="M764.0,1056.4 L766.8000000000001,1056.4 L766.8000000000001,1056.8000000000002 L764.6,1058.8000000000002 L763.2,1058.8000000000002 L763.2,1057.2 Z" fill="#101010"/><path d="M754.0,1060.4 L756.8000000000001,1060.4 L756.8000000000001,1060.8000000000002 L754.6,1062.8000000000002 L753.2,1062.8000000000002 L753.2,1061.2 Z" fill="#101010"/><path d="M759.0,1060.4 L761.8000000000001,1060.4 L761.8000000000001,1060.8000000000002 L759.6,1062.8000000000002 L758.2,1062.8000000000002 L758.2,1061.2 Z" fill="#101010"/><path d="M764.0,1060.4 L766.8000000000001,1060.4 L766.8000000000001,1060.8000000000002 L764.6,1062.8000000000002 L763.2,1062.8000000000002 L763.2,1061.2 Z" fill="#101010"/><path d="M754.0,1064.4 L756.8000000000001,1064.4 L756.8000000000001,1064.8000000000002 L754.6,1066.8000000000002 L753.2,1066.8000000000002 L753.2,1065.2 Z" fill="#101010"/><path d="M759.0,1064.4 L761.8000000000001,1064.4 L761.8000000000001,1064.8000000000002 L759.6,1066.8000000000002 L758.2,1066.8000000000002 L758.2,1065.2 Z" fill="#101010"/><path d="M764.0,1064.4 L766.8000000000001,1064.4 L766.8000000000001,1064.8000000000002 L764.6,1066.8000000000002 L763.2,1066.8000000000002 L763.2,1065.2 Z" fill="#101010"/><path d="M754.0,1068.4 L756.8000000000001,1068.4 L756.8000000000001,1068.8000000000002 L754.6,1070.8000000000002 L753.2,1070.8000000000002 L753.2,1069.2 Z" fill="#101010"/><path d="M759.0,1068.4 L761.8000000000001,1068.4 L761.8000000000001,1068.8000000000002 L759.6,1070.8000000000002 L758.2,1070.8000000000002 L758.2,1069.2 Z" fill="#101010"/><path d="M764.0,1068.4 L766.8000000000001,1068.4 L766.8000000000001,1068.8000000000002 L764.6,1070.8000000000002 L763.2,1070.8000000000002 L763.2,1069.2 Z" fill="#101010"/></svg>
<svg class="b" style="left:795px;top:1048px" width="27" height="23" viewBox="795 1048 27 23">
<path d="M797,1064.6 L806.6,1057.4 L802.4,1057.4 Q801,1056 802.6,1054.8 L808.6,1054.8 L806,1051.8 Q806.4,1050 808.4,1050.6 L814.4,1055.6 Q820.6,1057.4 820.4,1062.4 Q819.6,1068.6 812,1068.8 Q806,1068.6 804.6,1063.8 L799.6,1067 Q797,1067 797,1064.6 Z" fill="#f5792a"/>
<circle cx="812.4" cy="1061.6" r="4.5" fill="#fff"/><circle cx="812.6" cy="1061.6" r="2.7" fill="#0d4f9a"/></svg>
<div class="b" style="left:834px;top:1040px;width:48px;height:39px;background:#333333;"></div>
<svg class="b" style="left:846px;top:1048px" width="24" height="24" viewBox="846 1048 24 24">
<path d="M848,1053.6 L857.6,1049.4 L868.4,1053.2 L867,1066 L857,1070.6 L851,1066.6 Z" fill="#e2262c"/>
<path d="M848,1053.6 L857.6,1049.4 L868.4,1053.2 L859.4,1057.6 Z" fill="#f04a4e"/>
<path d="M859.4,1057.6 L868.4,1053.2 L867,1066 L857,1070.6 Z" fill="#c71c22"/>
<path d="M852.6,1055.2 L862,1052.6 L864,1053.6 L856.6,1056 Z M854.6,1057.4 L859,1056.2 L860.6,1058.4 L856,1059.8 Z M853,1062 L857.4,1060.8 L858.4,1062.6 L854,1064 Z" fill="#fff"/></svg>
<div class="b" style="left:495px;top:1077px;width:40px;height:2px;background:#f3b6b6;"></div>
<div class="b" style="left:544px;top:1077px;width:40px;height:2px;background:#f3b6b6;"></div>
<div class="b" style="left:834px;top:1077px;width:48px;height:2px;background:#f3b6b6;"></div>
<svg class="b" style="left:1750px;top:1048px" width="96" height="24" viewBox="1750 1048 96 24" fill="none" stroke="#fff">
<path d="M1755.4,1062.6 L1761,1057 L1766.6,1062.6" stroke-width="1.3"/>
<path d="M1780.4,1066.6 Q1780.8,1056.4 1791.4,1055.6" stroke="#8a8a8a" stroke-width="1.1"/>
<path d="M1783.6,1066.6 Q1784,1059.6 1791.4,1058.8" stroke="#a8a8a8" stroke-width="1.1"/>
<path d="M1786.8,1066.6 Q1787.2,1062.6 1791.4,1062" stroke="#fff" stroke-width="1.2"/>
<rect x="1789.4" y="1064.4" width="3" height="2.8" fill="#fff" stroke="none"/>
<path d="M1801.2,1057.4 L1804,1057.4 L1807.2,1054.2 L1807.2,1065.8 L1804,1062.6 L1801.2,1062.6 Z" stroke-width="1.1"/>
<path d="M1809.6,1057.4 Q1811.6,1060 1809.6,1062.6 M1811.8,1055.4 Q1815,1060 1811.8,1064.6 M1814,1053.4 Q1818.6,1060 1814,1066.6" stroke-width="1"/>
<path d="M1825.6,1052.6 L1840.6,1052.6 L1840.6,1064.4 L1836,1064.4 L1833,1067.4 L1830,1064.4 L1825.6,1064.4 Z" stroke-width="1.2"/>
<path d="M1828.4,1056 L1838,1056 M1828.4,1058.6 L1838,1058.6 M1828.4,1061.2 L1834.6,1061.2" stroke-width="1"/></svg>
<span class="t" style="left:1859.20px;top:1051.10px;font-size:12px;color:#fff;letter-spacing:-0.516px;">4:23 PM</span>
<span class="t" style="left:1855.00px;top:1067.90px;font-size:12px;color:#fff;letter-spacing:-0.339px;">1/23/2016</span>
<div class="b" style="left:1915px;top:1040px;width:1px;height:39px;background:#5a5a5a;"></div>
</body></html>
